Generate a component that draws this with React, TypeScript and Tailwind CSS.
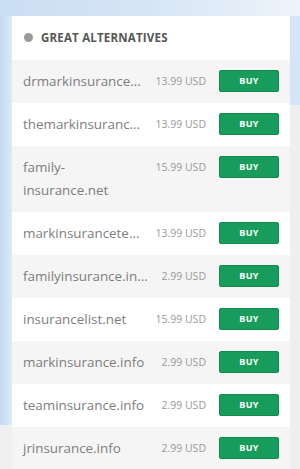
const domains = [
  { label: "drmarkinsurance...", price: "13.99 USD" },
  { label: "themarkinsuranc...", price: "13.99 USD" },
  { label: "family-\ninsurance.net", price: "15.99 USD" },
  { label: "markinsurancete...", price: "13.99 USD" },
  { label: "familyinsurance.in...", price: "2.99 USD" },
  { label: "insurancelist.net", price: "15.99 USD" },
  { label: "markinsurance.info", price: "2.99 USD" },
  { label: "teaminsurance.info", price: "2.99 USD" },
  { label: "jrinsurance.info", price: "2.99 USD" },
];

export default function App() {
  return (
    <div
      className="w-[300px] h-[469px] overflow-hidden flex flex-col bg-[#cadef3]"
      style={{ fontFamily: '"Open Sans", "Noto Sans", sans-serif' }}
    >
      <div className="h-[16px] shrink-0 bg-gradient-to-r from-[#cadef3] via-[#d6e5f5] to-[#eef4fb]" />
      <div className="flex flex-1">
        <div className="w-[12px] flex flex-col">
          <div className="h-[409px] bg-gradient-to-r from-[#c3daf2] to-[#dce9f6]" />
          <div className="flex-1 bg-[#eef0f2]" />
        </div>

        <div className="w-[278px] bg-white flex flex-col">
          <div className="flex items-start gap-[8px] pl-[12px] pt-[14px] h-[44px]">
            <span className="w-[9px] h-[9px] rounded-full bg-[#9a9a9a] mt-[3px]" />
            <span className="text-[11.5px] font-bold tracking-[0.2px] text-[#555] leading-[15px]">
              GREAT ALTERNATIVES
            </span>
          </div>

          {domains.map((d, i) => (
            <div
              key={d.label}
              className={`flex items-start pl-[11px] pr-[11px] py-[10px] ${i % 2 === 0 ? "bg-[#f5f5f5]" : "bg-white"}`}
            >
              <div className="w-[128px] shrink-0 text-[13.4px] leading-[23px] text-[#7d7d7d] whitespace-pre-line">
                {d.label}
              </div>
              <div className="flex-1 text-right text-[10.5px] leading-[23px] text-[#999] pr-[13px] whitespace-nowrap">
                {d.price}
              </div>
              <button className="w-[60px] h-[22px] rounded-[2px] bg-[#179c5c] border border-[#128a50] text-white text-[9px] font-bold tracking-[0.3px]">
                BUY
              </button>
            </div>
          ))}
        </div>

        <div className="w-[10px] flex flex-col">
          <div className="h-[89px] bg-[#d6e5f5]" />
          <div className="flex-1 bg-[#efefef]" />
        </div>
      </div>
    </div>
  );
}
